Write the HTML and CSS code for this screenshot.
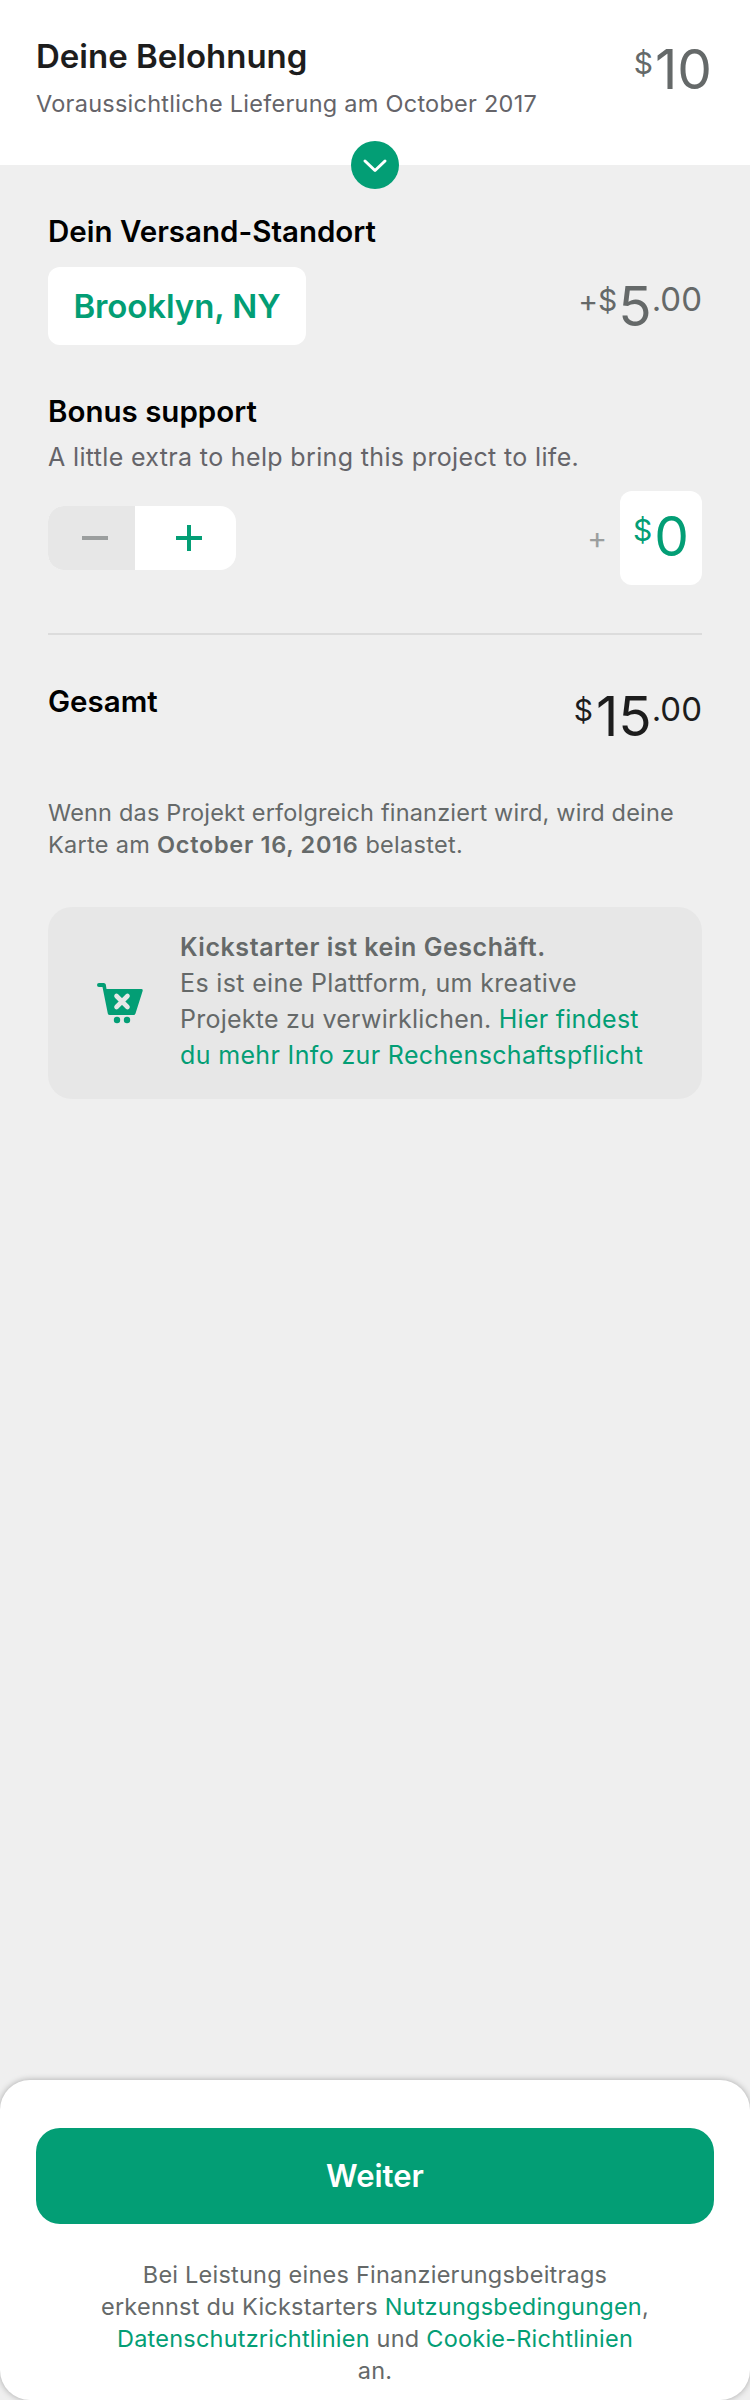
FILE: index.html
```html
<!DOCTYPE html>
<html lang="de">
<head>
<meta charset="utf-8">
<title>Deine Belohnung</title>
<link rel="stylesheet" href="styles.css">
</head>
<body>
<div class="page">
  <header class="reward">
    <div class="reward-text">
      <h1 class="reward-title">Deine Belohnung</h1>
      <p class="reward-delivery">Voraussichtliche Lieferung am October 2017</p>
    </div>
    <div class="amount"><span class="currency">$</span><span class="major">10</span></div>
    <button class="expand" aria-label="Details">
      <svg width="48" height="48" viewBox="0 0 48 48"><path d="M14 20l10 9.500 10-9.500" fill="none" stroke="#fff" stroke-width="3" stroke-linecap="round" stroke-linejoin="round"/></svg>
    </button>
  </header>
  <main class="content">
    <h2 class="heading">Dein Versand-Standort</h2>
    <div class="row shipping">
      <button class="location">Brooklyn, NY</button>
      <div class="amount shipping-amount"><span class="plus">+</span><span class="currency">$</span><span class="major">5</span><span class="minor">.00</span></div>
    </div>
    <h2 class="heading bonus-heading">Bonus support</h2>
    <p class="bonus-text">A little extra to help bring this project to life.</p>
    <div class="row bonus">
      <div class="stepper">
        <button class="step minus" aria-label="Weniger"><svg width="28" height="28" viewBox="0 0 28 28"><path d="M1 14h26" stroke="#9b9e9e" stroke-width="4"/></svg></button>
        <button class="step more" aria-label="Mehr"><svg width="28" height="28" viewBox="0 0 28 28"><path d="M1 14h26M14 1v26" stroke="#039e75" stroke-width="4"/></svg></button>
      </div>
      <div class="bonus-value">
        <span class="bonus-plus">+</span>
        <div class="bonus-box amount"><span class="currency">$</span><span class="major">0</span></div>
      </div>
    </div>
    <div class="divider"></div>
    <div class="row total">
      <h2 class="heading">Gesamt</h2>
      <div class="amount total-amount"><span class="currency">$</span><span class="major">15</span><span class="minor">.00</span></div>
    </div>
    <p class="charge">Wenn das Projekt erfolgreich finanziert wird, wird deine<br><span class="charge-date">Karte am <b>October 16, 2016</b> belastet.</span></p>
    <section class="notice">
      <svg class="cart" width="48" height="42" viewBox="0 0 48 42"><path class="cart-body" d="M2 0H6.800q1.600 0 2 1.600L9.500 6h35q1.700 0 1.200 1.700L38.500 30.500q-.5 1.500-2 1.500H12.800q-1.600 0-2-1.600L5.500 4H2a2 2 0 0 1 0-4z"/><path class="cart-cross" d="M19.500 13l11 11M30.500 13l-11 11"/><circle class="cart-body" cx="20" cy="37" r="3.200"/><circle class="cart-body" cx="30" cy="37" r="3.200"/></svg>
      <p class="notice-text"><b>Kickstarter ist kein Geschäft.</b><br>Es ist eine Plattform, um kreative<br><span class="notice-line">Projekte zu verwirklichen. <a>Hier findest</a></span><br><a>du mehr Info zur Rechenschaftspflicht</a></p>
    </section>
  </main>
  <footer class="footer">
    <button class="continue">Weiter</button>
    <p class="legal">Bei Leistung eines Finanzierungsbeitrags<br>erkennst du Kickstarters <a>Nutzungsbedingungen</a>,<br><a>Datenschutzrichtlinien</a> und <a>Cookie-Richtlinien</a><br>an.</p>
  </footer>
</div>
</body>
</html>
```
FILE: styles.css
```css
* { box-sizing: border-box; margin: 0; padding: 0; }
body { font-family: Inter, "Liberation Sans", sans-serif; background: #efefef; color: #656969; font-size: 25px; }
button { border: 0; font: inherit; background: none; display: flex; align-items: center; justify-content: center; }
a { color: #039e75; }
b { font-weight: 600; letter-spacing: .55px; }
.page { width: 750px; height: 2400px; display: flex; flex-direction: column; overflow: hidden; }
.row { display: flex; justify-content: space-between; }

.reward { position: relative; height: 165px; flex: none; background: #fff; display: flex; justify-content: space-between; padding: 36px 38px 0 36px; }
.reward-title { font-size: 33px; line-height: 40px; font-weight: 600; color: #1d1d1d; }
.reward-delivery { margin-top: 14px; font-size: 23.5px; line-height: 28px; color: #656469; letter-spacing: .25px; white-space: nowrap; }
.expand { position: absolute; left: 351px; top: 141px; width: 48px; height: 48px; border-radius: 50%; background: #039e75; }

.amount { display: flex; align-items: flex-start; white-space: nowrap; height: 66px; }
.major { font-size: 55px; line-height: 66px; }
.minor { font-size: 33px; line-height: 40px; padding-top: 6px; }
.currency { font-size: 30px; line-height: 40px; padding: 7px 2px 0 0; }
.plus { font-size: 30px; line-height: 40px; padding-top: 8px; }
.shipping-amount .currency { padding-right: 1px; }
.total-amount .currency { padding-right: 3px; }

.content { flex: 1; padding: 48px 48px 0; }
.heading { font-size: 29.5px; line-height: 36px; font-weight: 600; color: #000; }
.shipping { margin-top: 18px; }
.shipping-amount { margin-top: 6px; }
.location { width: 258px; height: 78px; border-radius: 12px; background: #fff; color: #039e75; font-weight: 600; font-size: 33px; letter-spacing: -.1px; }
.bonus-heading { margin-top: 48px; }
.bonus-text { margin-top: 13px; font-size: 25px; line-height: 30px; color: #656469; letter-spacing: .35px; }
.bonus { margin-top: 19px; align-items: center; }
.stepper { display: flex; width: 188px; height: 64px; border-radius: 16px; overflow: hidden; background: #fff; }
.step.minus { width: 87px; background: #e7e7e7; padding-left: 7px; }
.step.more { width: 101px; padding-left: 7px; }
.bonus-value { display: flex; align-items: center; gap: 13px; }
.bonus-plus { font-size: 30px; line-height: 36px; color: #9b9e9e; }
.bonus-box { width: 82px; height: 94px; border-radius: 12px; background: #fff; color: #039e75; padding: 12px 0 0 13px; }
.divider { height: 2px; background: #dcdcdc; margin-top: 48px; }
.total { margin-top: 48px; }
.total-amount { color: #1d1d1d; }
.charge { margin-top: 48px; font-size: 23.5px; line-height: 32px; white-space: nowrap; letter-spacing: .18px; }
.charge-date { letter-spacing: .3px; }
.charge-date b { letter-spacing: .7px; }
.notice { margin-top: 46px; height: 192px; border-radius: 24px; background: #e7e7e7; display: flex; }
.cart { margin: 76px 0 0 49px; flex: none; }
.cart-body { fill: #039e75; }
.cart-cross { stroke: #e7e7e7; stroke-width: 4.6; stroke-linecap: round; }
.notice-text { margin: 22px 0 0 35px; font-size: 25px; line-height: 36px; white-space: nowrap; letter-spacing: .35px; }
.notice-line { letter-spacing: .25px; }

.footer { height: 320px; flex: none; border-radius: 30px; background: #fff; box-shadow: 0 0 6px rgba(0,0,0,.3); padding: 48px 36px 0; }
.continue { width: 678px; height: 96px; border-radius: 24px; background: #039e75; color: #fff; font-weight: 600; font-size: 31px; padding-bottom: 2px; }
.legal { margin-top: 35px; font-size: 23.5px; line-height: 32px; text-align: center; white-space: nowrap; letter-spacing: .22px; }
```
